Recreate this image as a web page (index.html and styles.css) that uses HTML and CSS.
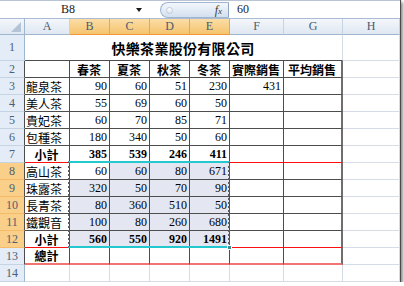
FILE: index.html
```html
<!DOCTYPE html>
<html>
	<head>
		<meta charset="UTF-8">
		<title>快樂茶業股份有限公司</title>
		<link rel="stylesheet" href="styles.css">
	</head>
	<body>
		<div class="window">

			<div class="formula-bar">
				<div class="name-box"><span class="ref">B8</span><i class="arrow"></i></div>
				<div class="fx-box"><span class="grip"></span><span class="fx">f<small>x</small></span></div>
				<div class="formula">60</div>
			</div>

			<div class="sheet">
				<!-- column headers -->
				<div class="corner"><i class="tri"></i></div>
				<div class="ch">A</div>
				<div class="ch hl">B</div>
				<div class="ch hl">C</div>
				<div class="ch hl">D</div>
				<div class="ch hl">E</div>
				<div class="ch">F</div>
				<div class="ch">G</div>
				<div class="ch">H</div>

				<!-- row 1 -->
				<div class="rh">1</div>
				<div class="cell title">快樂茶業股份有限公司</div>
				<div class="cell"></div>

				<!-- row 2 -->
				<div class="rh edge">2</div>
				<div class="cell tb"></div>
				<div class="cell tb mid bold">春茶</div>
				<div class="cell tb mid bold">夏茶</div>
				<div class="cell tb mid bold">秋茶</div>
				<div class="cell tb mid bold">冬茶</div>
				<div class="cell tb mid bold">實際銷售</div>
				<div class="cell tb mid bold end">平均銷售</div>
				<div class="cell"></div>

				<!-- row 3 -->
				<div class="rh edge">3</div>
				<div class="cell tb">龍泉茶</div>
				<div class="cell tb num">90</div>
				<div class="cell tb num">60</div>
				<div class="cell tb num">51</div>
				<div class="cell tb num">230</div>
				<div class="cell tb num">431</div>
				<div class="cell tb end"></div>
				<div class="cell"></div>

				<!-- row 4 -->
				<div class="rh edge">4</div>
				<div class="cell tb">美人茶</div>
				<div class="cell tb num">55</div>
				<div class="cell tb num">69</div>
				<div class="cell tb num">60</div>
				<div class="cell tb num">50</div>
				<div class="cell tb"></div>
				<div class="cell tb end"></div>
				<div class="cell"></div>

				<!-- row 5 -->
				<div class="rh edge">5</div>
				<div class="cell tb">貴妃茶</div>
				<div class="cell tb num">60</div>
				<div class="cell tb num">70</div>
				<div class="cell tb num">85</div>
				<div class="cell tb num">71</div>
				<div class="cell tb"></div>
				<div class="cell tb end"></div>
				<div class="cell"></div>

				<!-- row 6 -->
				<div class="rh edge">6</div>
				<div class="cell tb">包種茶</div>
				<div class="cell tb num">180</div>
				<div class="cell tb num">340</div>
				<div class="cell tb num">50</div>
				<div class="cell tb num">60</div>
				<div class="cell tb"></div>
				<div class="cell tb end"></div>
				<div class="cell"></div>

				<!-- row 7 -->
				<div class="rh edge">7</div>
				<div class="cell tb mid bold red">小計</div>
				<div class="cell tb num bold">385</div>
				<div class="cell tb num bold">539</div>
				<div class="cell tb num bold">246</div>
				<div class="cell tb num bold">411</div>
				<div class="cell tb red"></div>
				<div class="cell tb end red"></div>
				<div class="cell"></div>

				<!-- row 8 -->
				<div class="rh edge hl">8</div>
				<div class="cell tb">高山茶</div>
				<div class="cell tb num active">60<div class="selection"><i class="handle"></i></div></div>
				<div class="cell tb num shade">60</div>
				<div class="cell tb num shade">80</div>
				<div class="cell tb num shade">671</div>
				<div class="cell tb"></div>
				<div class="cell tb end"></div>
				<div class="cell"></div>

				<!-- row 9 -->
				<div class="rh edge hl">9</div>
				<div class="cell tb">珠露茶</div>
				<div class="cell tb num shade">320</div>
				<div class="cell tb num shade">50</div>
				<div class="cell tb num shade">70</div>
				<div class="cell tb num shade">90</div>
				<div class="cell tb"></div>
				<div class="cell tb end"></div>
				<div class="cell"></div>

				<!-- row 10 -->
				<div class="rh edge hl">10</div>
				<div class="cell tb">長青茶</div>
				<div class="cell tb num shade">80</div>
				<div class="cell tb num shade">360</div>
				<div class="cell tb num shade">510</div>
				<div class="cell tb num shade">50</div>
				<div class="cell tb"></div>
				<div class="cell tb end"></div>
				<div class="cell"></div>

				<!-- row 11 -->
				<div class="rh edge hl">11</div>
				<div class="cell tb">鐵觀音</div>
				<div class="cell tb num shade">100</div>
				<div class="cell tb num shade">80</div>
				<div class="cell tb num shade">260</div>
				<div class="cell tb num shade">680</div>
				<div class="cell tb"></div>
				<div class="cell tb end"></div>
				<div class="cell"></div>

				<!-- row 12 -->
				<div class="rh edge hl">12</div>
				<div class="cell tb mid bold red">小計</div>
				<div class="cell tb num bold shade">560</div>
				<div class="cell tb num bold shade">550</div>
				<div class="cell tb num bold shade">920</div>
				<div class="cell tb num bold shade">1491</div>
				<div class="cell tb red"></div>
				<div class="cell tb end red"></div>
				<div class="cell"></div>

				<!-- row 13 -->
				<div class="rh edge">13</div>
				<div class="cell tb mid bold last">總計</div>
				<div class="cell tb last"></div>
				<div class="cell tb last"></div>
				<div class="cell tb last"></div>
				<div class="cell tb last"></div>
				<div class="cell tb last"></div>
				<div class="cell tb end last"></div>
				<div class="cell"></div>

				<!-- row 14 -->
				<div class="rh">14</div>
				<div class="cell"></div>
				<div class="cell"></div>
				<div class="cell"></div>
				<div class="cell"></div>
				<div class="cell"></div>
				<div class="cell"></div>
				<div class="cell"></div>
				<div class="cell"></div>
			</div>

		</div>
	</body>
</html>
```

FILE: styles.css
```css
* {
	box-sizing: border-box;
	margin: 0;
	padding: 0;
}
body, html {
	background: #fff;
}
body {
	font-family: "Liberation Serif", "Noto Sans CJK TC", serif;
	font-size: 12px;
	color: #000;
}
.window {
	width: 401px;
	border-right: 1px solid #4a4a4a;
	box-shadow: 2px 2px 3px rgba(0, 0, 0, 0.45);
	background: #fff;
}

/* formula bar */
.formula-bar {
	display: flex;
	height: 19px;
	border-top: 1px solid #b9c5d4;
	border-bottom: 1px solid #a9bcd3;
}
.name-box {
	width: 160px;
	display: flex;
	align-items: center;
	padding-right: 14px;
	position: relative;
}
.name-box .ref {
	flex: 1;
	text-align: center;
	font-size: 12px;
	color: #222;
}
.arrow {
	width: 0;
	height: 0;
	border-left: 3px solid transparent;
	border-right: 3px solid transparent;
	border-top: 4px solid #1a1a1a;
	margin-right: 4px;
}
.fx-box {
	width: 69px;
	height: 16px;
	margin-top: 1px;
	display: flex;
	align-items: center;
	justify-content: space-between;
	padding: 0 6px 0 5px;
	border: 1px solid #9fb5d0;
	border-right-color: #8ea6c4;
	border-radius: 8px 0 0 8px;
	background: linear-gradient(#f3f7fc, #d3e0ef);
}
.grip {
	width: 7px;
	height: 7px;
	border-radius: 50%;
	border: 1px solid #c3ccd8;
	background: linear-gradient(#fff, #dfe5ec);
}
.fx {
	font-style: italic;
	font-size: 12px;
	color: #3b3b3b;
	font-family: "Liberation Serif", serif;
}
.fx small {
	font-size: 9px;
}
.formula {
	flex: 1;
	padding-left: 8px;
	display: flex;
	align-items: center;
	color: #222;
}

/* sheet grid */
.sheet {
	display: grid;
	grid-template-columns: 25px 45px 40px 40px 40px 40px 54px 59px 57px;
	grid-template-rows: 16px 26px repeat(13, 17px);
}
.corner, .ch {
	background: linear-gradient(#f4f7fb, #dfe7f1);
	border-right: 1px solid #c6d3e2;
	border-bottom: 1px solid #9eb6ce;
}
.corner {
	position: relative;
	border-right-color: #9eb6ce;
}
.tri {
	position: absolute;
	right: 3px;
	bottom: 2px;
	width: 0;
	height: 0;
	border-left: 10px solid transparent;
	border-bottom: 10px solid #b4c3d6;
}
.ch {
	display: flex;
	align-items: center;
	justify-content: center;
	color: #4a5b72;
	font-size: 12px;
}
.ch.hl {
	background: linear-gradient(#fbdda6, #f5c46e);
	border-right-color: #f0a548;
	border-bottom-color: #f29536;
}
.rh {
	display: flex;
	align-items: center;
	justify-content: center;
	background: #e4ecf7;
	color: #4f5e73;
	font-size: 12px;
	border-right: 1px solid #9eb6ce;
	border-bottom: 1px solid #c6d3e2;
}
.rh.edge {
	border-right-color: #4d4d4d;
}
.rh.hl {
	background: #f9cf89;
	border-bottom-color: #f5bb68;
}

/* cells */
.cell {
	display: flex;
	align-items: center;
	white-space: nowrap;
	overflow: visible;
	padding: 1px 2px 0 1px;
	border-right: 1px solid #d5dce6;
	border-bottom: 1px solid #d5dce6;
	font-size: 12px;
}
.cell.tb {
	border-right-color: #4d4d4d;
	border-bottom-color: #4d4d4d;
}
.cell.end {
	border-right: 2px solid #6e6e6e;
}
.num {
	justify-content: flex-end;
}
.mid {
	justify-content: center;
}
.bold {
	font-weight: bold;
}
.title {
	grid-column: span 7;
	justify-content: center;
	font-family: "Noto Sans CJK TC", sans-serif;
	font-weight: bold;
	font-size: 14px;
	letter-spacing: 0.3px;
	border-right-color: #d5dce6;
	border-bottom: 1px solid #4d4d4d;
}
.cell.red {
	border-bottom-color: #ff1010;
}
.cell.last {
	border-bottom: 2px solid #f07474;
}
.shade {
	background: #e4e7f1;
}

/* selected range B8:E12 */
.active {
	position: relative;
}
.selection {
	position: absolute;
	top: -2px;
	left: -2px;
	width: 162px;
	height: 87px;
	border-top: 2px solid #24c8cf;
	border-bottom: 2px solid #24c8cf;
	border-left: 2px dotted #5a5a5a;
	border-right: 2px dotted #5a5a5a;
	z-index: 1;
	pointer-events: none;
}
.handle {
	position: absolute;
	right: -4px;
	bottom: -4px;
	width: 5px;
	height: 5px;
	background: #3a8f98;
	border: 1px solid #fff;
}
```
